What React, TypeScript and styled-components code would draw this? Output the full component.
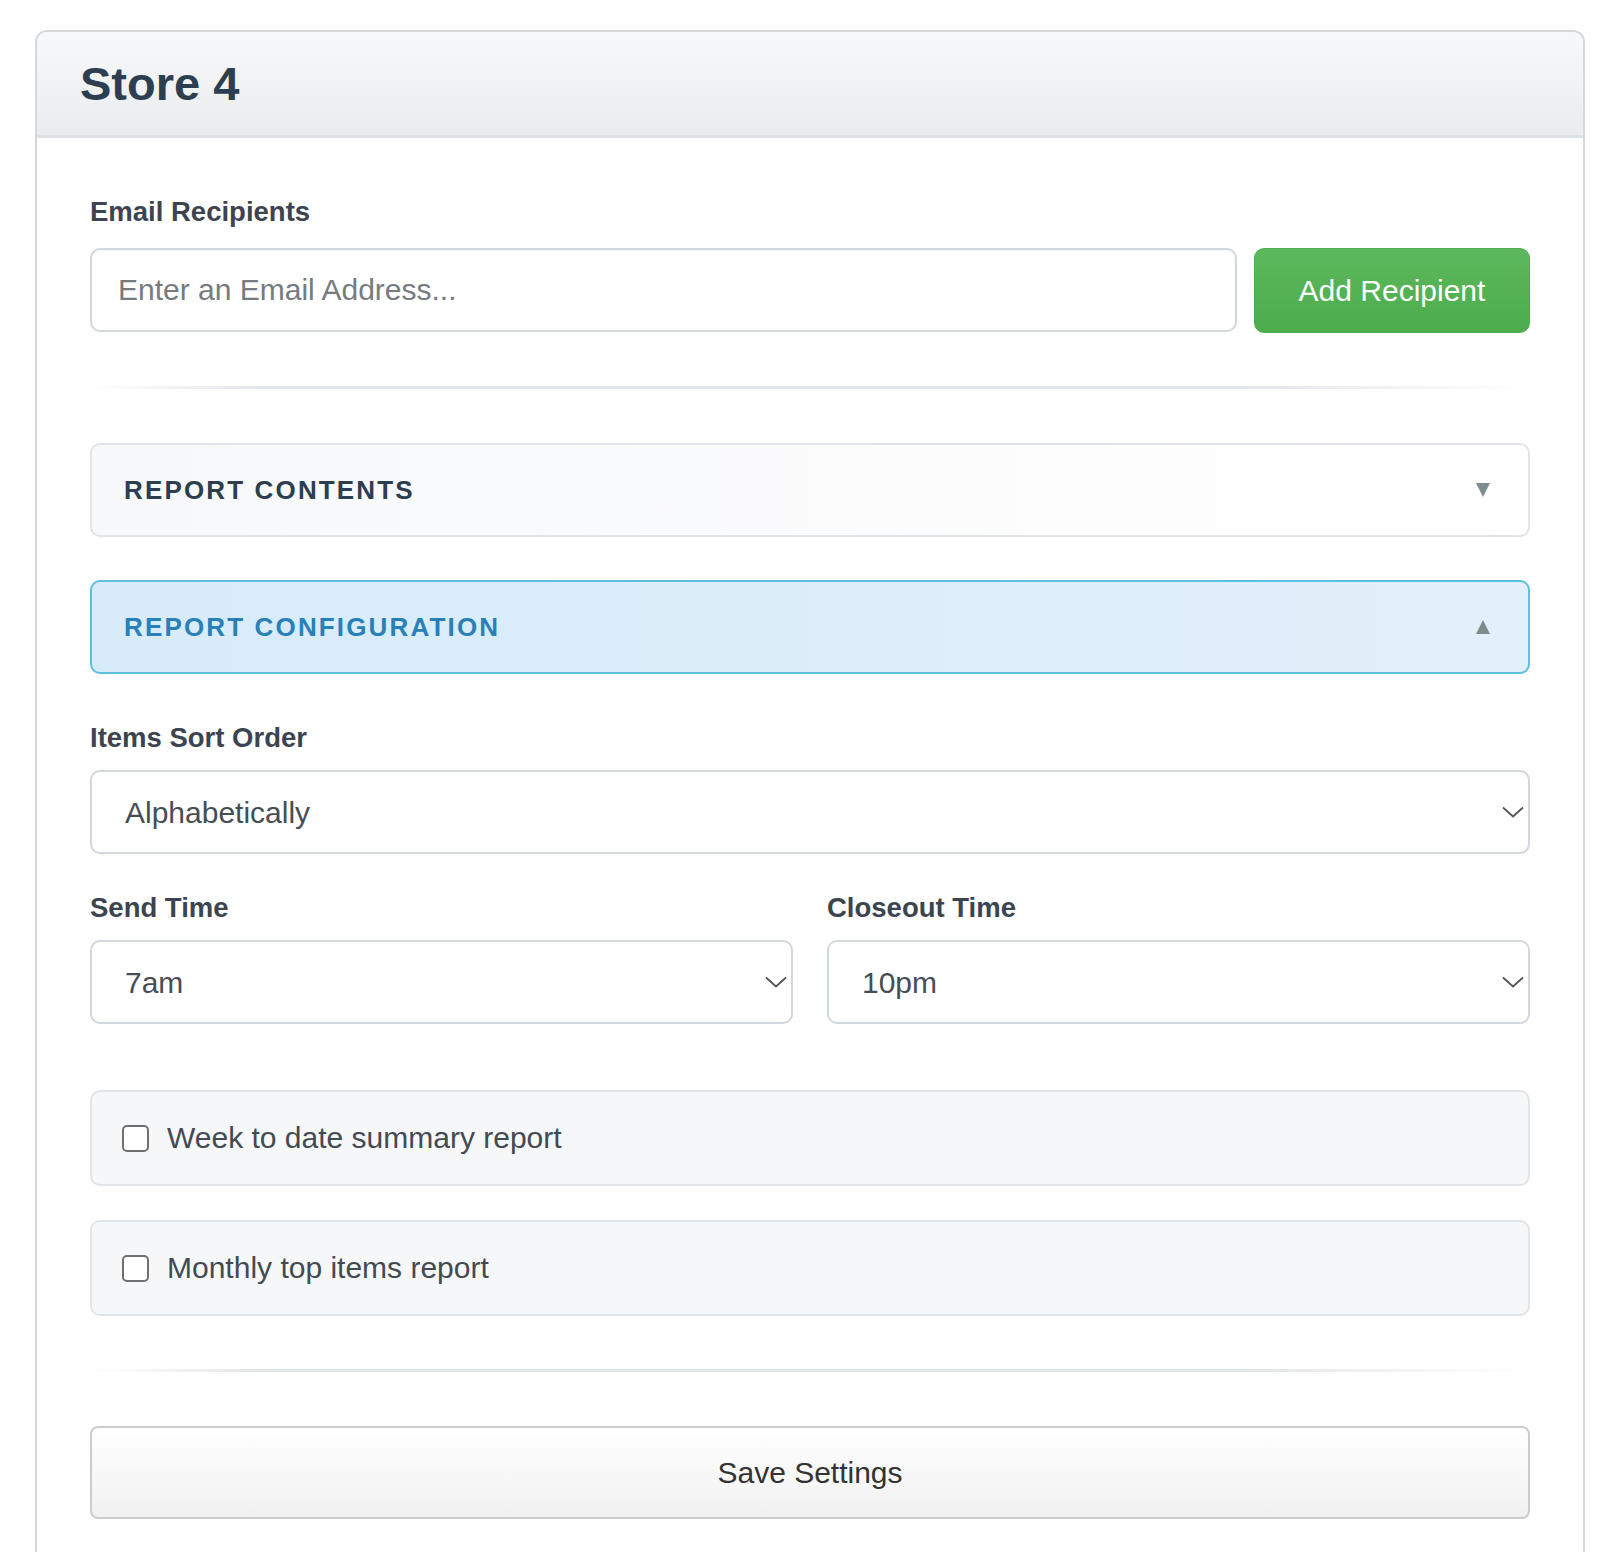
import styled, { createGlobalStyle } from "styled-components";

const GlobalStyle = createGlobalStyle`
  body {
    margin: 0;
    background: #ffffff;
    font-family: "Liberation Sans", Arial, sans-serif;
  }
  * {
    box-sizing: border-box;
  }
`;

const Page = styled.div`
  padding: 30px 29px 0 35px;
`;

const Card = styled.div`
  width: 1550px;
  border: 2px solid #d4d8dd;
  border-bottom: none;
  border-radius: 12px 12px 0 0;
  overflow: hidden;
  background: #ffffff;
`;

const CardHeader = styled.div`
  display: flex;
  align-items: center;
  height: 106px;
  padding: 0 43px;
  background: linear-gradient(#f7f8f9, #e9ecef);
  border-bottom: 3px solid #dde1e5;
`;

const Title = styled.h2`
  margin: 0;
  font-size: 47px;
  font-weight: 700;
  color: #2c3e50;
  line-height: 1;
`;

const CardBody = styled.div`
  padding: 57px 53px 52px;
`;

const FieldLabel = styled.label<{ $gap?: number }>`
  display: block;
  font-size: 27.5px;
  font-weight: 700;
  color: #3b4450;
  line-height: 33px;
  margin-bottom: ${(p) => p.$gap ?? 16}px;
`;

const InputRow = styled.div`
  display: flex;
  gap: 17px;
`;

const TextInput = styled.input`
  flex: 1;
  height: 84px;
  padding: 0 26px;
  border: 2px solid #d2d7de;
  border-radius: 10px;
  font-family: inherit;
  font-size: 30px;
  color: #495057;
  background: #ffffff;
  box-shadow: inset 0 1px 2px rgba(0, 0, 0, 0.04);
  outline: none;
  &::placeholder {
    color: #767b80;
  }
`;

const AddButton = styled.button`
  width: 276px;
  height: 85px;
  border: 1px solid #4cae4c;
  border-radius: 10px;
  background: linear-gradient(#5cb85c, #4cad4c);
  color: #ffffff;
  font-family: inherit;
  font-size: 30px;
  cursor: pointer;
`;

const Divider = styled.hr`
  height: 3px;
  border: 0;
  margin: 53px 0 54px;
  background: linear-gradient(
    to right,
    rgba(222, 226, 230, 0),
    #e2e5e9 12%,
    #e2e5e9 80%,
    rgba(222, 226, 230, 0)
  );
`;

const SectionToggle = styled.div<{ $active?: boolean }>`
  display: flex;
  align-items: center;
  justify-content: space-between;
  height: 94px;
  padding: 0 38px 0 32px;
  border: 2px solid ${(p) => (p.$active ? "#5bc0de" : "#e1e4e8")};
  border-radius: 10px;
  background: ${(p) =>
    p.$active
      ? "linear-gradient(to right, #d7ebf9, #e2f0fb)"
      : "linear-gradient(to right, #f7f8fa, #ffffff)"};
  color: ${(p) => (p.$active ? "#2980b9" : "#2c3e50")};
  font-size: 26px;
  font-weight: 700;
  letter-spacing: 2.15px;
  text-transform: uppercase;
  cursor: pointer;
  & + & {
    margin-top: 43px;
  }
`;

const Caret = styled.svg`
  width: 14px;
  height: 14px;
  flex-shrink: 0;
`;

const ConfigPanel = styled.div`
  padding-top: 47px;
`;

const Field = styled.div``;

const TwoCols = styled.div`
  display: grid;
  grid-template-columns: 1fr 1fr;
  gap: 34px;
  margin-top: 37px;
`;

const SelectWrap = styled.div`
  position: relative;
`;

const Select = styled.select`
  width: 100%;
  height: 84px;
  padding: 0 40px 0 33px;
  border: 2px solid #d2d7de;
  border-radius: 10px;
  background: #ffffff;
  font-family: inherit;
  font-size: 30px;
  color: #474d54;
  appearance: none;
  outline: none;
`;

const Chevron = styled.svg`
  position: absolute;
  right: 6px;
  top: 50%;
  width: 22px;
  height: 12px;
  margin-top: -6px;
  pointer-events: none;
`;

const CheckList = styled.div`
  display: flex;
  flex-direction: column;
  gap: 34px;
  margin-top: 66px;
`;

const CheckRow = styled.label`
  display: flex;
  align-items: center;
  gap: 18px;
  height: 96px;
  padding: 0 30px;
  border: 2px solid #e2e5e8;
  border-radius: 10px;
  background: #f6f7f9;
  font-size: 30px;
  color: #434a52;
  cursor: pointer;
`;

const CheckBox = styled.span`
  width: 27px;
  height: 27px;
  border: 2px solid #6f6f6f;
  border-radius: 5px;
  background: #ffffff;
  flex-shrink: 0;
`;

const SaveButton = styled.button`
  display: block;
  width: 100%;
  height: 93px;
  border: 2px solid #cccccc;
  border-radius: 8px;
  background: linear-gradient(#ffffff, #f1f1f1);
  font-family: inherit;
  font-size: 30px;
  color: #333333;
  cursor: pointer;
`;

function SelectField({ value }: { value: string }) {
  return (
    <SelectWrap>
      <Select defaultValue={value}>
        <option>{value}</option>
      </Select>
      <Chevron viewBox="0 0 22 12">
        <path
          d="M1 1.5 L11 10.5 L21 1.5"
          fill="none"
          stroke="#555"
          strokeWidth="1.8"
        />
      </Chevron>
    </SelectWrap>
  );
}

function Triangle({ up }: { up?: boolean }) {
  return (
    <Caret viewBox="0 0 14 14">
      <path d={up ? "M7 0 L14 14 L0 14 Z" : "M0 0 L14 0 L7 14 Z"} fill="#7f8c8d" />
    </Caret>
  );
}

export default function App() {
  return (
    <>
      <GlobalStyle />
      <Page>
        <Card>
          <CardHeader>
            <Title>Store 4</Title>
          </CardHeader>
          <CardBody>
            <FieldLabel $gap={20}>Email Recipients</FieldLabel>
            <InputRow>
              <TextInput placeholder="Enter an Email Address..." />
              <AddButton>Add Recipient</AddButton>
            </InputRow>

            <Divider />

            <SectionToggle>
              Report Contents
              <Triangle />
            </SectionToggle>
            <SectionToggle $active>
              Report Configuration
              <Triangle up />
            </SectionToggle>

            <ConfigPanel>
              <Field>
                <FieldLabel>Items Sort Order</FieldLabel>
                <SelectField value="Alphabetically" />
              </Field>
              <TwoCols>
                <Field>
                  <FieldLabel>Send Time</FieldLabel>
                  <SelectField value="7am" />
                </Field>
                <Field>
                  <FieldLabel>Closeout Time</FieldLabel>
                  <SelectField value="10pm" />
                </Field>
              </TwoCols>

              <CheckList>
                <CheckRow>
                  <CheckBox />
                  Week to date summary report
                </CheckRow>
                <CheckRow>
                  <CheckBox />
                  Monthly top items report
                </CheckRow>
              </CheckList>
            </ConfigPanel>

            <Divider />

            <SaveButton>Save Settings</SaveButton>
          </CardBody>
        </Card>
      </Page>
    </>
  );
}
